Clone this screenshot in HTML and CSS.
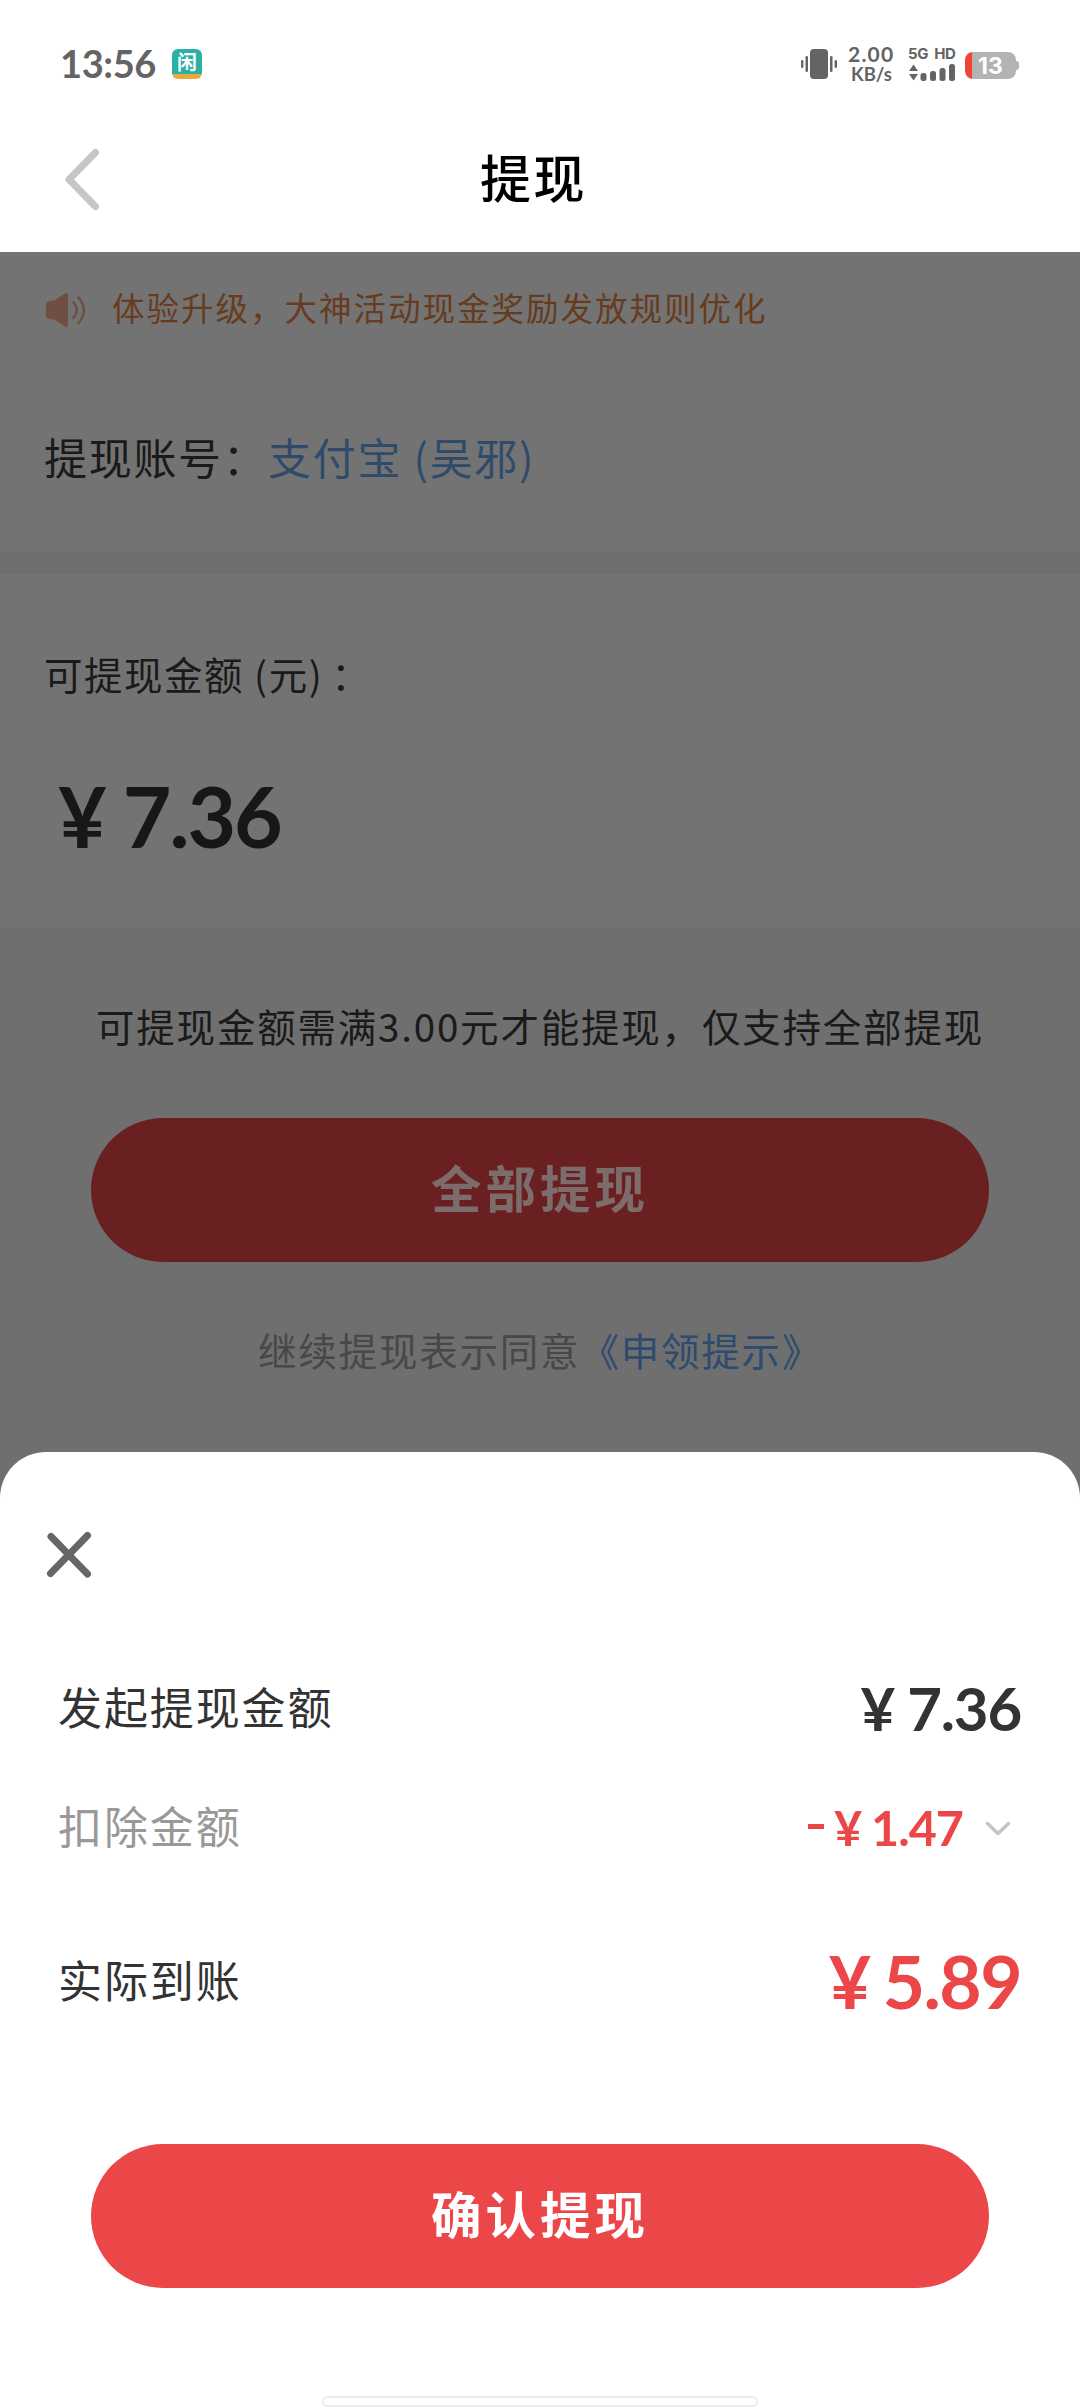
FILE: index.html
```html
<!DOCTYPE html>
<html lang="zh-CN">
<head>
<meta charset="utf-8">
<title>提现</title>
<link rel="stylesheet" href="styles.css">
</head>
<body>
<div class="screen">
  <header class="status">
    <div class="time">13:56</div>
    <div class="app-icon"><span class="app-char">闲</span></div>
    <div class="status-right">
      <svg class="vibrate" width="38" height="32" viewBox="0 0 38 32" fill="#646464"><rect x="10" y="1" width="18" height="30" rx="4"/><rect x="5.5" y="8" width="2.5" height="16" rx="1.2"/><rect x="1" y="12" width="2.4" height="8" rx="1.2"/><rect x="30" y="8" width="2.5" height="16" rx="1.2"/><rect x="34.6" y="12" width="2.4" height="8" rx="1.2"/></svg>
      <div class="speed"><span class="speed-num">2.00</span><span class="speed-unit">KB/s</span></div>
      <div class="signal">
        <span class="net">5G HD</span>
        <svg width="48" height="18" viewBox="0 0 48 18" fill="#646464"><path d="M5.500 .5 10 7H1zM1 10h9l-4.500 6.500z"/><rect x="12.500" y="9" width="6" height="8" rx="2.500"/><rect x="22" y="7" width="6" height="10" rx="2.500"/><rect x="31.500" y="4" width="6" height="13" rx="2.500"/><rect x="41" y="0" width="6" height="17" rx="2.500"/></svg>
      </div>
      <div class="battery"><span class="battery-level">13</span></div>
    </div>
  </header>
  <nav class="titlebar">
    <svg class="back" width="36" height="64" viewBox="0 0 36 64" fill="none" stroke="#c6c6c6" stroke-width="7" stroke-linecap="round" stroke-linejoin="round"><path d="M31.500 4.500 5 31.500 31.500 58.500"/></svg>
    <h1 class="title">提现</h1>
  </nav>
  <main class="page">
    <section class="account-card">
      <div class="notice">
        <svg class="speaker" width="44" height="36" viewBox="0 0 44 36"><path d="M3 9.500 10 8 20 1.500Q23 0 23 3V33Q23 36 20 34.500L10 28 3 26.500Q1 26 1 24V12Q1 10 3 9.500z" fill="#6f4e44"/><path d="M28.500 10.500Q35 18 28.500 26M33.500 5.500Q44.500 18 33.500 31" fill="none" stroke="#6f4e44" stroke-width="2.600" stroke-linecap="round"/></svg>
        <span class="notice-text">体验升级，大神活动现金奖励发放规则优化</span>
      </div>
      <div class="account"><span class="account-label">提现账号：</span><span class="account-name">支付宝 (吴邪)</span></div>
    </section>
    <section class="balance-card">
      <div class="balance-label">可提现金额 (元)<span class="colon">：</span></div>
      <div class="money money-balance"><span class="yen">¥</span><span>7.36</span></div>
    </section>
    <p class="rule">可提现金额需满3.00元才能提现，仅支持全部提现</p>
    <button class="pill pill-dim">全部提现</button>
    <p class="agree">继续提现表示同意<a class="link">《申领提示》</a></p>
  </main>
  <section class="sheet">
    <svg class="close" width="46" height="48" viewBox="0 0 46 48" stroke="#666" stroke-width="7" stroke-linecap="round"><path d="M5 5.500 41.500 43M41.500 4.500 4.500 42.500"/></svg>
    <div class="row row-request"><span>发起提现金额</span><div class="money money-request"><span class="yen">¥</span><span>7.36</span></div></div>
    <div class="row row-deduct"><span>扣除金额</span><div class="money money-deduct"><span class="minus"></span><span class="yen">¥</span><span>1.47</span>
      <svg class="chevron" width="26" height="16" viewBox="0 0 26 16" fill="none" stroke="#c4c4c4" stroke-width="3.500" stroke-linecap="round" stroke-linejoin="round"><path d="M2.500 2.500 13 12.500 23.500 2.500"/></svg></div></div>
    <div class="row row-actual"><span>实际到账</span><div class="money money-actual"><span class="yen">¥</span><span>5.89</span></div></div>
    <button class="pill pill-confirm">确认提现</button>
    <div class="home-bar"></div>
  </section>
</div>
</body>
</html>
```
FILE: styles.css
```css
* { box-sizing: border-box; }
body { margin: 0; background: #fff; font-family: "Noto Sans CJK SC", sans-serif; }
h1, p { margin: 0; font-weight: 400; }
.screen { width: 1080px; height: 2408px; overflow: hidden; display: flex; flex-direction: column; }

.status { height: 128px; padding: 0 58px 0 60px; display: flex; align-items: center; color: #646464; font-family: Lato, sans-serif; }
.time { width: 112px; font-size: 38px; font-weight: 700; line-height: 40px; letter-spacing: -.4px; padding-bottom: 2px; }
.app-icon { width: 30px; height: 30px; border-radius: 6px; background: linear-gradient(#2bb0a7 25px, #eaa93c 25px); display: flex; justify-content: center; }
.app-char { font: 700 20px/25px "Noto Sans CJK SC", sans-serif; color: #fff; }
.status-right { margin-left: auto; display: flex; align-items: center; }
.vibrate { margin-right: 10px; }
.speed { width: 60px; display: flex; flex-direction: column; align-items: flex-start; }
.speed-num { font-size: 21px; line-height: 20px; font-weight: 700; letter-spacing: 1.200px; }
.speed-unit { font-size: 18.500px; line-height: 20px; font-weight: 700; margin-left: 3px; }
.signal { width: 57px; display: flex; flex-direction: column; gap: 3px; }
.net { font: 700 15px/14px Inter, sans-serif; white-space: nowrap; letter-spacing: -.4px; word-spacing: 3px; }
.battery { width: 51px; height: 27px; border-radius: 8px; margin: 2px 6px 0 0; background: linear-gradient(90deg, #f04438 7px, #b3b3b3 7px); display: flex; justify-content: center; position: relative; }
.battery::after { content: ""; position: absolute; left: 51px; top: 9px; width: 3px; height: 9px; border-radius: 0 3px 3px 0; background: #b3b3b3; }
.battery-level { font: 700 23px/28px Inter, sans-serif; color: #fff; }

.titlebar { height: 124px; padding: 0 0 20px 64px; display: flex; align-items: flex-start; }
.back { margin-top: 20px; flex: none; }
.title { margin-left: 380px; font-size: 51px; line-height: 97px; font-weight: 500; letter-spacing: 2.500px; color: #000; }

.page { height: 1200px; flex: none; background: #6f6f6f; }
.account-card { height: 300px; background: #737373; }
.notice { height: 110px; padding-left: 45px; display: flex; align-items: center; }
.speaker { margin-top: 5px; }
.notice-text { margin: -2px 0 0 23px; font-size: 32.500px; letter-spacing: 2px; color: #673b1d; }
.account { height: 84px; padding: 0 0 0 44px; margin-top: 52px; font-size: 43px; line-height: 84px; letter-spacing: 1.700px; display: flex; }
.account-label { width: 224px; color: #1a1a1a; }
.account-name { color: #304b6a; }
.balance-card { height: 353px; margin-top: 22px; padding: 70px 0 0 44px; background: #737373; }
.balance-label { font-size: 38.500px; line-height: 58px; letter-spacing: 1.500px; color: #1a1a1a; }
.colon { margin-left: 8px; }

.money { font-family: Lato, sans-serif; font-weight: 700; display: flex; align-items: center; }
.money-balance { height: 100px; margin: 64px 0 0 14px; font-size: 84px; line-height: 100px; letter-spacing: -2px; color: #171717; }
.money-balance .yen { margin-right: 18px; }

.rule { padding-top: 70px; text-align: center; font-size: 38.500px; line-height: 56px; letter-spacing: 1.800px; color: #1a1a1a; }
.pill { display: flex; width: 898px; height: 144px; margin: 0 auto; border: 0; padding: 0 0 8px; border-radius: 72px; align-items: center; justify-content: center; font: 700 50.500px/80px "Noto Sans CJK SC", sans-serif; letter-spacing: 4px; }
.pill-dim { margin-top: 65px; background: #6a1f20; color: #7c6c6c; }
.agree { padding: 59px 0 0 258px; font-size: 38.500px; line-height: 56px; letter-spacing: 1.800px; color: #484848; }
.link { color: #2d4b6e; }

.sheet { position: relative; height: 956px; flex: none; padding: 79px 58px 0; background: #fff; color: #333; }
.sheet { border-radius: 46px 46px 0 0; box-shadow: 0 -1px 0 46px #6f6f6f; clip-path: inset(0); }
.close { display: block; margin-left: -12px; }
.row { display: flex; justify-content: space-between; align-items: center; font-size: 44px; line-height: 80px; letter-spacing: 1.900px; height: 80px; }
.row-request { margin-top: 87px; }
.row-deduct { margin-top: 39px; color: #999; }
.row-actual { margin-top: 74px; }
.money-request { font-size: 60px; letter-spacing: -1.200px; padding: 3px 1px 0 0; }
.money-request .yen { margin-right: 13px; }
.money-deduct { font-size: 48.500px; letter-spacing: -1px; padding-top: 3px; color: #eb4749; }
.money-deduct .yen { margin-right: 10px; }
.minus { width: 16px; height: 5px; margin-right: 10px; background: #eb4749; }
.chevron { margin: 5px 11px 0 22px; }
.money-actual { font-size: 73px; letter-spacing: -1.500px; padding: 4px 1px 0 0; color: #eb4749; }
.money-actual .yen { margin-right: 13px; }
.pill-confirm { margin-top: 125px; background: #eb4749; color: #fff; }
.home-bar { width: 436px; height: 11px; margin: 108px auto 0; border: 2px solid #ececec; border-radius: 5px; background: #fff; }
```
